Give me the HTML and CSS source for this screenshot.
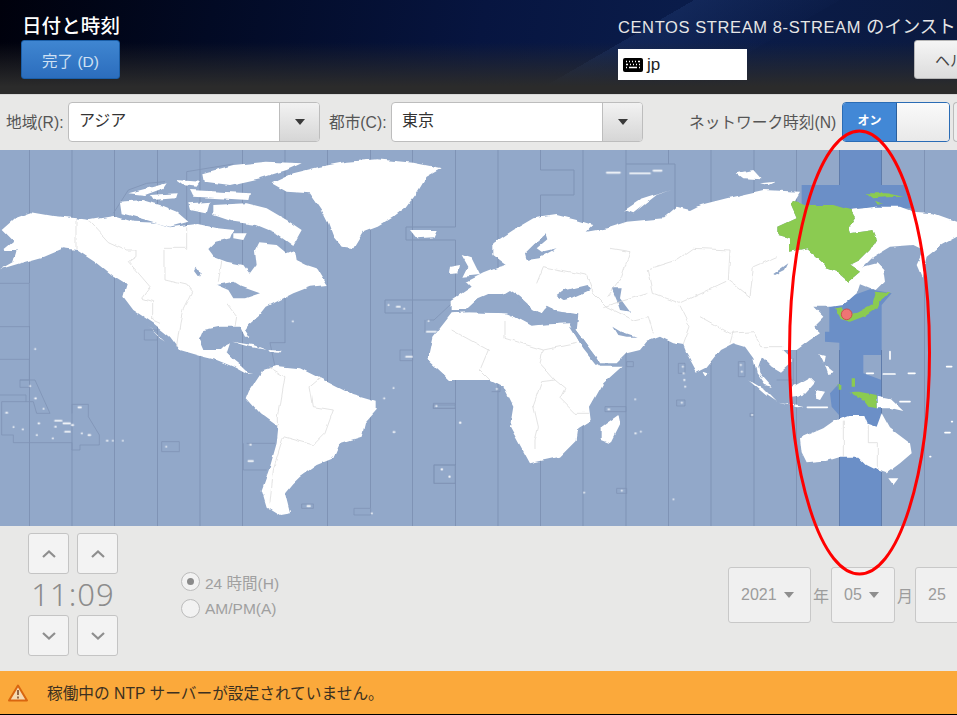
FILE: index.html
```html
<!DOCTYPE html>
<html lang="ja">
<head>
<meta charset="utf-8">
<title>日付と時刻</title>
<link rel="stylesheet" href="styles.css">
</head>
<body>
<div class="screen">
  <header class="header">
    <div class="header-left">
      <h1 class="spoke-title">日付と時刻</h1>
      <button class="done">完了 (D)</button>
    </div>
    <div class="header-right">
      <div class="product">CENTOS STREAM 8-STREAM <span class="product-ja">のインスト</span></div>
      <div class="header-row">
        <div class="kbd">
          <svg class="kbd-icon" width="20" height="15" viewBox="0 0 20 15"><rect width="20" height="14" y="1" rx="2" fill="#000"/><path d="M3 4.500h1M6 4.500h1M9 4.500h1M12 4.500h1M15 4.500h2M3 7.500h2M7 7.500h1M10 7.500h1M13 7.500h1M16 7.500h1M3 10.500h1M6 10.500h8M16 10.500h1" stroke="#fff" stroke-width="1.600" fill="none"/></svg>
          <span>jp</span>
        </div>
        <button class="help">ヘル</button>
      </div>
    </div>
  </header>

  <div class="toolbar">
    <label class="tb-label">地域(R):</label>
    <div class="combo"><span class="combo-text">アジア</span><span class="combo-btn"><i class="tri"></i></span></div>
    <label class="tb-label city">都市(C):</label>
    <div class="combo"><span class="combo-text">東京</span><span class="combo-btn"><i class="tri"></i></span></div>
    <label class="tb-label net">ネットワーク時刻(N)</label>
    <div class="switch"><span class="switch-on">オン</span><span class="switch-knob"></span></div>
    <button class="gear"></button>
  </div>

  <div class="map">
    <svg width="957" height="376" viewBox="0 0 957 376">
      <defs>
        <filter id="coast" filterUnits="userSpaceOnUse" x="0" y="0" width="957" height="376">
          <feTurbulence type="fractalNoise" baseFrequency="0.07" numOctaves="3" seed="4" result="n"/>
          <feDisplacementMap in="SourceGraphic" in2="n" scale="4" xChannelSelector="R" yChannelSelector="G"/>
        </filter>
      </defs>
      <rect width="957" height="376" fill="#92a8c9"/>
      <!-- selected zone band -->
      <g transform="translate(700 0) scale(.33333)">
        <path class="band" d="M418,0H545V105H612L635,175H455V190H305V105H418Z"/>
        <path class="band" d="M388,462L510,418L575,430L545,465V602H418V578L375,575V545H388Z"/>
      </g>
      <g transform="translate(700 200) scale(.33333)">
        <path class="band" d="M418,0H545V15H490V70L545,90V180L535,225H510L490,205L435,215L395,170L390,130L418,100Z"/>
        <path class="band" d="M418,200H545V528H418Z"/>
      </g>
      <!-- time zone meridians -->
      <path class="tz" d="M29.500,0V133M29.500,176V376M72,0V376M114.500,0V376M157.500,0V376M200,0V376M242.500,0V376M285,0V193M327.500,0V376M370.500,0V358M412.500,0V376M455.500,0V77H406V90H455.500V150H385V163H412.500M455.500,163V376M498,0V376M540.500,0V20H574V45H540.500V376M583,0V376M626,0V376M626,14H675V67H668.500V376M668.500,0V14M711,0V376M754,0V376M796.500,0V376M924.500,0V376"/>
      <path class="tz-edge" d="M839.500,0V35M881.500,0V35M839.500,200V376M881.500,200V376"/>
      <g transform="scale(.33333)"><path class="tz-fine" d="M0,400H88V530H0M0,628H88V690H60V712L88,712M60,690H105L150,790H110L100,755H5V855H40V878H216V900H240V885H298V855L265,800V763H216V790M0,735H78V755M433,540H472V570H433ZM485,875H538V905H485ZM740,880H825M730,880V960H800M905,1062H940V1075H905ZM1062,1075H1112V1095H1062ZM1200,600H1238V632H1200ZM1300,775V760H1366V775H1300M1302,945H1366V1000H1302ZM340,190L385,120L440,100L495,95M560,65L700,42M560,65V230M810,578H855M810,578L825,650M1280,510H1302L1366,450M1275,510V548"/></g>
      <g transform="translate(400 0) scale(.33333)"><path class="tz-fine" d="M100,765H166V775H100ZM102,945H166V1000H102ZM275,725H300V710M650,1015H680V1030H650ZM615,770H678V785H615ZM680,635H700V650H680ZM835,640H855V670H835ZM830,750H855V768H830ZM1015,635H1035V680H1015ZM1050,790H1060V800H1050ZM1130,690H1180V720M1180,625V690"/></g>
      <!-- all land: coastlines roughened by the filter -->
      <g filter="url(#coast)">
      <g transform="scale(.33333)" fill="#fff">
        <path d="M5,240L45,205L95,187L160,198L228,205L270,210L340,198L400,215L470,218L510,232L590,222L650,235L700,240L690,265L650,275L625,300L640,320L680,335L730,345L750,372L770,345L765,300L775,280L830,285L860,310L885,300L890,330L920,345L950,355L980,405L930,410L880,430L840,450L800,470L780,495L745,525L735,540L748,560L735,560L720,530L660,530L610,540L597,570L610,600L660,600L670,590L690,580L680,610L700,630L725,650L745,670L760,672L740,672L700,650L650,630L610,620L540,600L510,560L460,520L400,480L370,440L380,405L340,380L290,340L230,300L190,295L130,320L60,340L0,358L40,335L50,300L10,300L40,275Z"/>
        <path d="M815,100L880,70L960,50L1040,35L1130,28L1240,38L1325,55L1280,80L1250,130L1220,170L1180,200L1130,230L1090,245L1060,295L1025,290L1000,260L985,220L965,180L930,130L860,125Z"/>
        <path d="M360,155L430,150L480,165L530,185L565,215L510,230L440,210L365,190Z"/>
        <path d="M385,130L460,110L500,100L490,115L435,135Z"/>
        <path d="M610,70L700,45L800,35L905,40L860,60L780,85L690,105L615,95Z"/>
        <path d="M530,90L600,95L590,110L550,105Z"/>
        <path d="M450,135L530,130L525,145L460,150Z"/>
        <path d="M570,120L750,130L745,150L580,140Z"/>
        <path d="M565,160L630,155L620,190L570,180Z"/>
        <path d="M640,165L740,160L800,175L860,210L905,240L880,285L830,250L770,225L700,215L640,195Z"/>
        <path d="M700,250L740,250L730,270L700,265Z"/>
        <path d="M700,575L760,585L800,600L750,590Z"/>
        <path d="M805,600L845,602L840,608L810,607Z"/>
        <path d="M445,530L495,575L480,565Z"/>
        <path d="M750,720L790,660L830,648L900,655L960,685L1010,710L1060,735L1130,755L1130,780L1095,820L1085,860L1020,880L1000,925L950,945L900,980L880,1000L855,1030L870,1090L840,1095L800,1070L785,1020L810,950L830,880L835,830L780,790L740,745Z"/>
        <path fill="#92a8c9" d="M650,405L700,395L725,410L780,430L735,445L700,445L685,420ZM590,350L605,370L600,380L585,360Z"/>
      </g>
      <g transform="translate(400 0) scale(.33333)" fill="#fff">
        <path d="M155,450L215,410L200,395L250,370L300,350L320,345L280,315L280,280L340,240L400,205L470,195L530,210L580,225L560,245L620,235L680,215L790,205L830,170L870,180L900,165L980,145L1090,120L1200,125L1185,150L1170,160L1190,205L1135,230L1135,255L1170,265L1170,305L1220,295L1270,340L1280,355L1310,365L1345,395L1380,365L1350,345L1380,330L1410,300L1430,265L1420,240L1350,250L1345,235L1365,205L1350,180L1430,170L1500,170L1540,185L1600,190L1671,215L1671,260L1625,285L1580,320L1565,380L1550,345L1570,300L1540,285L1470,290L1420,320L1390,350L1430,340L1450,360L1455,395L1430,420L1380,400L1370,430L1330,465L1295,470L1240,470L1270,500L1240,530L1260,550L1230,570L1190,600L1150,600L1180,630L1140,665L1115,650L1085,620L1075,650L1080,680L1115,710L1095,705L1070,670L1060,625L1035,590L1000,580L960,600L920,650L890,665L860,610L850,585L820,580L780,560L740,575L720,600L680,610L650,640L600,640L590,620L530,540L535,490L460,480L425,490L400,478L360,440L330,420L310,432L265,432L230,480L155,480Z"/>
        <path d="M155,490L100,560L85,630L150,690L270,690L310,710L340,770L330,830L390,940L480,920L530,870L535,835L575,810L570,770L610,700L665,650L600,650L540,580L510,520L400,525L320,490L215,485Z"/>
        <path fill="#92a8c9" d="M190,487L235,445L265,432L310,432L345,450L375,470L400,480L425,490L440,470L460,480L530,490L530,515L440,522L395,527L325,490ZM470,435L490,420L520,415L560,405L570,420L525,440L490,450ZM635,415L665,415L660,445L690,485L660,480L650,450ZM375,310L400,285L440,250L445,265L410,295L425,305L470,295L415,325L380,330ZM510,530L530,540L600,635L590,645L550,595ZM640,530L665,545L710,560L680,560L655,555ZM1120,372L1165,340L1155,360L1125,375Z"/>
        <path d="M655,795L660,820L630,880L605,870L605,830Z"/>
        <path d="M30,240L110,240L100,262L50,265Z"/>
        <path d="M185,315L215,325L240,375L190,380L205,350Z"/>
        <path d="M150,350L180,345L175,370L147,372Z"/>
        <path d="M675,180L720,150L815,120L770,135L700,190Z"/>
        <path d="M1010,70L1060,60L1085,88L1030,85Z"/>
        <path d="M1080,100L1125,95L1105,105Z"/>
        <path d="M910,665L925,670L920,682Z"/>
      </g>
      <g transform="translate(700 0) scale(.33333)">
        <path fill="#8bcb51" d="M285,150L270,160L290,205L235,230L235,255L270,265L270,305L320,295L370,340L380,355L410,365L445,395L480,365L450,345L480,330L510,300L530,265L520,240L450,250L445,235L465,205L450,180L400,165L320,165ZM408,475L425,472L445,492L470,488L518,462L528,425L572,430L545,448L535,470L495,498L450,515L422,507ZM500,130L560,130L610,140L560,142L520,145ZM525,152L550,162L530,160Z"/>
      </g>
      <g transform="translate(700 200) scale(.33333)" fill="#fff">
        <path d="M300,265L370,235L405,210L445,195L490,195L500,220L530,230L545,190L570,235L630,280L635,310L600,340L560,370L530,360L500,345L475,320L420,320L370,335L320,340L305,310Z"/>
        <path d="M565,385L595,385L580,405Z"/>
        <path d="M275,110L330,80L345,95L310,135L275,140Z"/>
        <path d="M145,88L190,115L230,155L200,135Z"/>
        <path d="M235,158L310,170L290,172Z"/>
        <path d="M350,120L375,125L360,150L345,145Z"/>
        <path d="M355,10L375,15L370,40Z"/>
        <path d="M375,45L405,70L385,75Z"/>
        <path d="M170,60L215,110L200,105Z"/>
        <path d="M533,137L570,145L610,183L575,175L533,175Z"/>
        <path fill="#8bcb51" d="M445,125L480,125L530,135L533,175L505,170L490,150Z"/>
        <path fill="#8bcb51" d="M416,105h8v14h-8ZM452,85h10v22h-10Z"/>
        <path class="lborder" d="M430,212V320M505,225V278H532V360"/>
      </g>
      <g transform="scale(.33333)" class="lborder">
        <path d="M228,205V298M270,215L325,275L380,300H408V320L385,335L420,375L450,410L425,445L458,455V510L480,520M495,300V390L560,405L575,425L550,475L540,520L530,590M560,232V295H495M665,335L655,395M680,460L710,500L705,530M805,650L855,680L835,800L835,830M850,860L940,885L975,850L1000,780L940,770L930,710L960,685M850,860L820,960L810,1060"/>
      </g>
      <g transform="translate(400 0) scale(.33333)" class="lborder">
        <path d="M155,540L265,600L240,660L270,690M315,510V565L430,600L420,640L465,690L425,695L400,765L415,830L405,870V900M430,600L530,580M465,690L495,715L480,745L525,790L570,790M410,400L430,350L560,375L580,430L620,470L700,510L745,500L760,550M630,295L690,305L665,380L620,440M750,355L830,330L880,295L990,300L985,390L1050,440L1060,350L1130,320M745,360L760,430L840,460L980,395M745,430L610,470M900,500L990,550L1060,545L1085,590L1150,590M840,470L870,530L850,585M1000,545L990,580"/>
      </g>
      </g>
      <!-- small islands -->
      <g transform="scale(.33333)"><path class="dots" d="M105,597h1M90,708h1M105,745h3M130,776h1M18,788h4M40,831h1M68,838h1M110,855h1M158,865h1M115,820h3M165,812h20M190,820h20M215,825h5M165,830h3M195,845h15M245,850h1M265,855h6M235,772h8M320,872h3M338,872h1M368,872h1M498,890h1M750,884h3M745,933h14M878,514h1M1180,714h1M1152,745h1M1180,846h4M1380,818h1M1325,958h1M1348,980h1M1165,465h1M1190,470h10M1212,476h1M1218,620h18M1308,768h2M1285,513h1M1280,545h28M922,1068h8M1115,1090h1"/></g>
      <g transform="translate(400 0) scale(.33333)"><path class="dots" d="M620,68h40M690,70h60M760,62h25M290,717h1M180,818h1M125,958h1M148,980h1M625,778h3M705,748h1M705,850h3M722,845h1M552,1028h1M665,1022h1M820,1048h1M848,650h1M850,670h2M852,690h2M855,710h1M845,758h1M1022,645h1M1025,665h1M1056,795h1"/></g>
      <g transform="translate(700 200) scale(.33333)"><path class="dots" d="M500,70h20M550,72h35M625,70h20M740,50h15M735,248h15M690,320h2M755,215h2M600,155h30M322,172h60M570,5v22"/></g>
      <g transform="translate(700 0) scale(.33333)">
        <circle cx="440" cy="493" r="16" fill="#ee7474" stroke="#cc4e4e" stroke-width="3"/>
      </g>
    </svg>
  </div>

  <div class="bottom">
    <div class="clock">
      <div class="clock-row">
        <button class="spin"><svg width="16" height="10" viewBox="0 0 16 10"><path class="chev" d="M2,8L8,2.500L14,8"/></svg></button>
        <button class="spin"><svg width="16" height="10" viewBox="0 0 16 10"><path class="chev" d="M2,8L8,2.500L14,8"/></svg></button>
      </div>
      <div class="time">11:09</div>
      <div class="clock-row">
        <button class="spin"><svg width="16" height="10" viewBox="0 0 16 10"><path class="chev" d="M2,2L8,7.500L14,2"/></svg></button>
        <button class="spin"><svg width="16" height="10" viewBox="0 0 16 10"><path class="chev" d="M2,2L8,7.500L14,2"/></svg></button>
      </div>
    </div>
    <div class="format">
      <div class="radio-row"><span class="radio radio-on"></span>24 時間(H)</div>
      <div class="radio-row"><span class="radio"></span>AM/PM(A)</div>
    </div>
    <div class="date">
      <div class="pick pick-year">2021<i class="tri-dim"></i></div>
      <span class="unit">年</span>
      <div class="pick pick-month">05<i class="tri-dim"></i></div>
      <span class="unit">月</span>
      <div class="pick pick-day">25</div>
    </div>
  </div>

  <div class="infobar">
    <svg class="warn" width="20" height="18" viewBox="0 0 20 18"><path d="M10,1.500L19,16.500H1Z" fill="#f6d9b0" stroke="#d9660f" stroke-width="2" stroke-linejoin="round"/><path d="M10,6V11M10,12.500V14.500" stroke="#8a5a3a" stroke-width="1.800"/></svg>
    <span>稼働中の NTP サーバーが設定されていません。</span>
  </div>

  <svg class="annotation" width="957" height="715" viewBox="0 0 957 715"><ellipse cx="859.500" cy="352.500" rx="70" ry="221.500" fill="none" stroke="#f00" stroke-width="3"/></svg>
</div>
</body>
</html>
```
FILE: styles.css
```css
html, body { margin: 0; padding: 0; height: 100%; overflow: hidden; background: #000; }
* { box-sizing: border-box; }
.screen {
  position: relative; width: 957px; height: 715px; overflow: hidden;
  display: flex; flex-direction: column;
  font-family: "Liberation Sans", "Noto Sans CJK JP", sans-serif;
  background: #e8e8e7; border-bottom: 1px solid #000;
}
button { font-family: inherit; padding: 0; }

.header {
  height: 95px; flex: none; display: flex; color: #fff; overflow: hidden;
  background:
    linear-gradient(180deg, rgba(43,43,43,0) 45%, #2b2b2b 92%),
    linear-gradient(150deg, transparent 62%, rgba(40,70,130,.28) 62%, rgba(20,40,90,.1) 75%, transparent 75%),
    linear-gradient(100deg, #00010c 0, #020a24 22%, #071540 50%, #0a1c4a 70%, #0b1a40 100%);
  border-bottom: 1px solid #d8d8d8;
}
.header-left { width: 618px; flex: none; padding: 15px 0 0 21px; }
.spoke-title { margin: 0 0 2px 1px; font-size: 19.500px; line-height: 23px; font-weight: 500; letter-spacing: .1px; white-space: nowrap; }
.done {
  display: block; width: 99px; height: 39px; border: 1px solid #1a5ea8; border-radius: 3px;
  color: #cfe0f3; font-size: 15.500px;
  background: linear-gradient(#3f86d1, #2c6dbd);
}
.header-right { flex: 1; min-width: 0; padding-top: 15px; }
.product { font-size: 16.500px; line-height: 24px; color: #e6e6e6; white-space: nowrap; letter-spacing: .6px; }
.product-ja { font-size: 18px; letter-spacing: 0; }
.header-row { display: flex; align-items: flex-start; }
.kbd {
  width: 129px; height: 31px; flex: none; margin-top: 10px; background: #fff; color: #222;
  display: flex; align-items: center; padding-left: 5px; gap: 4px; font-size: 17px; font-weight: 500;
}
.help {
  flex: 1; min-width: 0; height: 39px; margin: 1px -4px 0 167px; text-align: left; padding-left: 20px;
  font-size: 15px; color: #444; white-space: nowrap; overflow: hidden;
  border: 1px solid #b5b5b5; border-radius: 3px 0 0 3px; background: linear-gradient(#f5f5f5, #dcdcdc);
}

.toolbar { height: 55px; flex: none; display: flex; align-items: center; padding: 0 0 1px 6px; color: #4a4a4a; font-size: 15.700px; white-space: nowrap; overflow: hidden; }
.tb-label { width: 62px; flex: none; color: #555; padding-bottom: 2px; }
.tb-label.city { width: 71px; padding-left: 9px; }
.tb-label.net { width: 199px; padding-left: 46px; }
.combo {
  width: 252px; height: 40px; flex: none; display: flex; background: #fff;
  border: 1px solid #bdbdbd; border-radius: 4px; overflow: hidden;
}
.combo-text { flex: 1; padding-left: 10px; line-height: 36px; font-size: 16px; color: #333; }
.combo-btn {
  width: 40px; display: flex; align-items: center; justify-content: center;
  border-left: 1px solid #bdbdbd; background: linear-gradient(#f2f2f2, #d6d6d6);
}
.tri { width: 0; height: 0; border-left: 5.500px solid transparent; border-right: 5.500px solid transparent; border-top: 6px solid #3a3a3a; }
.switch {
  width: 108px; height: 40px; flex: none; display: flex; border: 1px solid #2a6cb5; border-radius: 4px; overflow: hidden;
}
.switch-on { width: 53px; background: #4288d6; color: #fff; font-size: 12px; font-weight: bold; text-align: center; line-height: 36px; }
.switch-knob { flex: 1; background: linear-gradient(#fafafa, #e9e9e9); border-left: 1px solid #2a5f9c; }
.gear { flex: 1; min-width: 0; height: 40px; margin-left: 3px; border: 1px solid #bbb; border-right: 0; border-radius: 4px 0 0 4px; background: #eee; }

.map { height: 376px; flex: none; line-height: 0; }
.map svg { display: block; filter: blur(.45px); }
.band { fill: #6b8fc7; stroke: none; }
.tz { fill: none; stroke: #7f93b5; stroke-width: 1; }
.tz-edge { fill: none; stroke: #5f7cab; stroke-width: 1; }
.tz-fine { fill: none; stroke: #7f93b5; stroke-width: 2.400; }
.dots { fill: none; stroke: #fff; stroke-width: 5; stroke-linecap: round; }
.lborder { fill: none; stroke: #d4d4d4; stroke-width: 2; }

.bottom { flex: 1; display: flex; align-items: flex-start; color: #a0a0a0; min-height: 0; overflow: hidden; }
.clock { width: 90px; flex: none; margin: 7px 0 0 28px; }
.clock-row { display: flex; gap: 8px; }
.spin {
  width: 41px; height: 41px; display: flex; align-items: center; justify-content: center;
  background: #f3f3f3; border: 1px solid #c4c4c4; border-radius: 3px;
}
.chev { fill: none; stroke: #8e8e8e; stroke-width: 2.200; }
.time { height: 41px; line-height: 41px; font-family: "Noto Sans", sans-serif; font-weight: 300; font-size: 31px; color: #8c8c8c; text-align: center; letter-spacing: 1px; white-space: nowrap; }
.format { width: 610px; flex: none; padding: 42px 0 0 63px; font-size: 15.500px; }
.radio-row { height: 27px; display: flex; align-items: center; gap: 5px; white-space: nowrap; }
.radio { width: 19px; height: 19px; flex: none; border: 1px solid #bcbcbc; border-radius: 50%; background: #f2f2f2; display: flex; align-items: center; justify-content: center; }
.radio-on::after { content: ""; width: 7px; height: 7px; border-radius: 50%; background: #8a8a8a; }
.date { flex: 1; min-width: 0; display: flex; align-items: center; margin: 41px 0 0 0; font-size: 16px; }
.pick {
  height: 56px; display: flex; align-items: center; flex: none; gap: 7px; padding-left: 12px;
  background: #f0f0f0; border: 1px solid #c8c8c8; border-radius: 3px; color: #9c9c9c;
}
.pick-year { width: 83px; }
.pick-month { width: 64px; }
.pick-day { flex: 1; min-width: 0; margin-right: -4px; }
.unit { width: 20px; flex: none; text-align: center; color: #9c9c9c; }
.tri-dim { width: 0; height: 0; border-left: 5.500px solid transparent; border-right: 5.500px solid transparent; border-top: 6px solid #8e8e8e; }

.infobar {
  height: 43px; flex: none; display: flex; align-items: center; padding-left: 8px; gap: 19px;
  background: #fba93b; color: #3c3020; font-size: 15.700px;
}
.warn { flex: none; }
.annotation { position: absolute; left: 0; top: 0; pointer-events: none; }
```
